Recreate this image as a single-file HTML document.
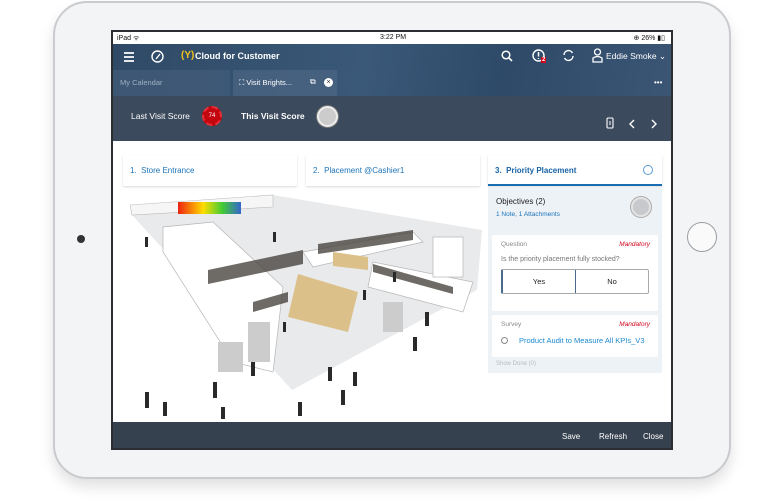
<!DOCTYPE html>
<html><head><meta charset="utf-8"><style>
*{margin:0;padding:0;box-sizing:border-box}
body{width:780px;height:504px;background:#fff;font-family:"Liberation Sans",sans-serif;position:relative;overflow:hidden}
.ipad{position:absolute;left:53px;top:1px;width:678px;height:478px;border-radius:34px;background:#f3f4f6;border:2px solid #c9cbcf;box-shadow:0 8px 14px rgba(0,0,0,.12)}
.screen{position:absolute;left:111px;top:30px;width:562px;height:420px;background:#fff;border:2px solid #2a2d31;overflow:hidden}
.abs{position:absolute}
.status{left:0;top:0;width:100%;height:12px;background:#fff;font-size:7px;color:#111}
.hdr{left:0;top:12px;width:100%;height:52px;background:linear-gradient(100deg,#2f4a66 0%,#3a5878 45%,#2e4a68 70%,#3b5675 100%)}
.score{left:0;top:64px;width:100%;height:45px;background:#3b4a5c}
.w{color:#fff}
.card{background:#fff;box-shadow:0 1px 2px rgba(0,0,0,.15);font-size:8px;color:#1b73b8}
.foot{left:0;top:390px;width:100%;height:30px;background:#35414f;color:#fff;font-size:8px}
</style></head><body>
<div class="ipad"></div>
<div class="abs" style="left:77px;top:235px;width:8px;height:8px;border-radius:50%;background:#333"></div>
<div class="abs" style="left:687px;top:222px;width:30px;height:30px;border-radius:50%;border:1.5px solid #9a9ea4;background:#fafafa"></div>
<div class="screen">
 <div class="abs status"><span class="abs" style="left:4px;top:2px">iPad ᯤ</span><span class="abs" style="left:267px;top:2px">3:22 PM</span><span class="abs" style="right:6px;top:2px">⊕ 26% ▮▯</span></div>
 <div class="abs hdr">
  <svg class="abs" style="left:10px;top:7px" width="12" height="12"><path d="M1 2H11M1 6H11M1 10H11" stroke="#fff" stroke-width="1.8"/></svg>
  <svg class="abs" style="left:38px;top:6px" width="13" height="13"><circle cx="6.5" cy="6.5" r="5.5" fill="none" stroke="#fff" stroke-width="1.4"/><path d="M9 4L5 9" stroke="#fff" stroke-width="1.4"/></svg>
  <span class="abs" style="left:68px;top:6px;color:#f4c21b;font-size:10px;font-weight:bold">(Y)</span>
  <span class="abs w" style="left:82px;top:7px;font-size:9px;font-weight:bold">Cloud for Customer</span>
  <svg class="abs" style="left:388px;top:6px" width="12" height="12"><circle cx="5" cy="5" r="3.8" fill="none" stroke="#fff" stroke-width="1.5"/><path d="M8 8L11 11" stroke="#fff" stroke-width="1.6"/></svg>
  <svg class="abs" style="left:419px;top:5px" width="13" height="13"><circle cx="6.5" cy="6.5" r="5.5" fill="none" stroke="#fff" stroke-width="1.4"/><path d="M6.5 3V7.5M6.5 9V10" stroke="#fff" stroke-width="1.5"/></svg>
  <span class="abs" style="left:428px;top:13px;background:#d0021b;color:#fff;font-size:6px;font-weight:bold;padding:0 1px">2</span>
  <svg class="abs" style="left:449px;top:5px" width="13" height="13"><path d="M2 6A4.5 4.5 0 0 1 10.5 4M11 7A4.5 4.5 0 0 1 2.5 9" fill="none" stroke="#fff" stroke-width="1.4"/></svg>
  <svg class="abs" style="left:479px;top:4px" width="11" height="15"><circle cx="5.5" cy="4" r="3" fill="none" stroke="#fff" stroke-width="1.3"/><path d="M1 14V10Q5.5 7 10 10V14Z" fill="none" stroke="#fff" stroke-width="1.3"/></svg>
  <span class="abs w" style="left:493px;top:7px;font-size:8.5px">Eddie Smoke ⌄</span>
  <div class="abs" style="left:0;top:26px;width:117px;height:26px;background:rgba(70,95,125,.6)"><span class="abs" style="left:7px;top:8px;font-size:7.5px;color:#9fb0c4">My Calendar</span></div>
  <div class="abs" style="left:120px;top:26px;width:104px;height:26px;background:rgba(80,105,135,.6)"><span class="abs w" style="left:6px;top:8px;font-size:7.5px">⛶ Visit Brights...</span><span class="abs w" style="left:77px;top:7px;font-size:8px">⧉</span><span class="abs" style="left:91px;top:8px;width:9px;height:9px;border-radius:50%;background:#fff;color:#333;font-size:7px;text-align:center;line-height:9px">×</span></div>
  <span class="abs w" style="left:541px;top:34px;font-size:8px">•••</span>
 </div>
 <div class="abs score">
  <span class="abs w" style="left:18px;top:15px;font-size:8.5px">Last Visit Score</span>
  <div class="abs" style="left:89px;top:10px;width:20px;height:20px;border-radius:50%;background:#c4060f;border:2px dashed #e53038;color:#fff;font-size:6px;text-align:center;line-height:16px">74</div>
  <span class="abs w" style="left:128px;top:15px;font-size:8.5px;font-weight:bold">This Visit Score</span>
  <div class="abs" style="left:204px;top:10px;width:21px;height:21px;border-radius:50%;background:#ccc;border:2px solid #eee;box-shadow:0 0 0 1px #777"></div>
  <svg class="abs" style="left:493px;top:21px" width="8" height="12"><rect x="1" y="1" width="6" height="10" rx="1" fill="none" stroke="#fff" stroke-width="1.1"/><path d="M3 5H5M3 7H5" stroke="#fff"/></svg>
  <svg class="abs" style="left:515px;top:22px" width="30" height="12"><path d="M6 2L2 6L6 10M24 2L28 6L24 10" fill="none" stroke="#fff" stroke-width="1.4"/></svg>
 </div>
 <div class="abs card" style="left:10px;top:123px;width:174px;height:31px"><span class="abs" style="left:7px;top:11px">1.&nbsp; Store Entrance</span></div>
 <div class="abs card" style="left:193px;top:123px;width:174px;height:31px"><span class="abs" style="left:7px;top:11px">2.&nbsp; Placement @Cashier1</span></div>
 <div class="abs card" style="left:375px;top:123px;width:174px;height:31px;border-bottom:2px solid #1b6db3"><span class="abs" style="left:7px;top:11px;font-weight:bold;color:#1763a6">3.&nbsp; Priority Placement</span><span class="abs" style="left:155px;top:10px;width:10px;height:10px;border:1px solid #5a9bd5;border-radius:50%"></span></div>
 <div class="abs" style="left:375px;top:155px;width:174px;height:186px;background:#edf2f7">
  <span class="abs" style="left:8px;top:10px;font-size:8px;color:#222">Objectives (2)</span>
  <span class="abs" style="left:8px;top:24px;font-size:6.5px;color:#1b73b8">1 Note, 1 Attachments</span>
  <div class="abs" style="left:143px;top:10px;width:20px;height:20px;border-radius:50%;background:#c7c9cc;border:2px solid #e4e4e4;box-shadow:0 0 0 1px #aaa"></div>
  <div class="abs" style="left:4px;top:48px;width:166px;height:76px;background:#fff;border-radius:2px">
   <span class="abs" style="left:9px;top:6px;font-size:6.5px;color:#888">Question</span>
   <span class="abs" style="right:8px;top:6px;font-size:6.5px;color:#d0021b;font-style:italic">Mandatory</span>
   <span class="abs" style="left:9px;top:21px;font-size:7px;color:#777">Is the priority placement fully stocked?</span>
   <div class="abs" style="left:9px;top:34px;width:148px;height:25px;border:1px solid #aaa;border-left:2px solid #4a6b8c;border-radius:2px;display:flex;font-size:7.5px;color:#222"><div style="flex:1;text-align:center;line-height:23px;border-right:1px solid #4a6b8c">Yes</div><div style="flex:1;text-align:center;line-height:23px">No</div></div>
  </div>
  <div class="abs" style="left:4px;top:128px;width:166px;height:42px;background:#fff;border-radius:2px">
   <span class="abs" style="left:9px;top:6px;font-size:6.5px;color:#888">Survey</span>
   <span class="abs" style="right:8px;top:6px;font-size:6.5px;color:#d0021b;font-style:italic">Mandatory</span>
   <span class="abs" style="left:9px;top:22px;width:7px;height:7px;border:1px solid #888;border-radius:50%"></span>
   <span class="abs" style="left:27px;top:21px;font-size:7.5px;color:#1b8ad0">Product Audit to Measure All KPIs_V3</span>
  </div>
  <span class="abs" style="left:8px;top:174px;font-size:6px;color:#bbb">Show Done (0)</span>
 </div>
 <svg class="abs" style="left:10px;top:160px" width="362" height="230">
  <defs><linearGradient id="g"><stop offset="0" stop-color="#e21"/><stop offset=".4" stop-color="#fd0"/><stop offset=".7" stop-color="#4c3"/><stop offset="1" stop-color="#36c"/></linearGradient></defs>
  <polygon points="7,13 150,3 359,38 354,98 169,198 9,23" fill="#e9eaeb"/>
  <polygon points="7,13 150,3 150,15 9,23" fill="#f6f6f6" stroke="#bbb" stroke-width=".6"/>
  <rect x="55" y="10" width="63" height="12" fill="url(#g)"/>
  <g fill="#fff" stroke="#b5b5b5" stroke-width=".7">
   <polygon points="40,35 90,30 160,95 150,180 110,170 40,60"/>
   <polygon points="180,60 290,40 300,50 190,75"/>
   <polygon points="250,70 350,90 340,120 245,95"/>
   <rect x="310" y="45" width="30" height="40"/>
  </g>
  <g fill="#4a4540" opacity=".8">
   <polygon points="85,78 180,58 180,72 85,92"/><polygon points="195,52 290,38 290,48 195,62"/>
   <polygon points="250,72 330,95 330,102 250,80"/><polygon points="130,110 165,100 165,110 130,120"/>
  </g>
  <g fill="#dcc08a"><polygon points="175,82 235,100 225,140 165,125"/><polygon points="210,60 245,65 245,78 210,74"/></g>
  <g fill="#ccc"><rect x="95" y="150" width="25" height="30"/><rect x="125" y="130" width="22" height="40"/><rect x="260" y="110" width="20" height="30"/></g>
  <g fill="#2a2a2a"><rect x="22" y="200" width="4" height="16"/><rect x="40" y="210" width="4" height="14"/><rect x="90" y="190" width="4" height="16"/><rect x="98" y="215" width="4" height="12"/><rect x="128" y="170" width="4" height="14"/><rect x="230" y="180" width="4" height="14"/><rect x="290" y="145" width="4" height="14"/><rect x="302" y="120" width="4" height="14"/><rect x="205" y="175" width="4" height="14"/><rect x="218" y="198" width="4" height="15"/><rect x="175" y="210" width="4" height="14"/><rect x="22" y="45" width="3" height="10"/><rect x="150" y="40" width="3" height="10"/><rect x="270" y="80" width="3" height="10"/><rect x="160" y="130" width="3" height="10"/><rect x="240" y="98" width="3" height="10"/></g>
 </svg>
 <div class="abs foot"><span class="abs" style="left:449px;top:10px">Save</span><span class="abs" style="left:486px;top:10px">Refresh</span><span class="abs" style="left:530px;top:10px">Close</span></div>
</div>
</body></html>
